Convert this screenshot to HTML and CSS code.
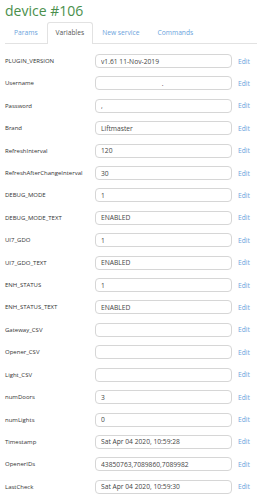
FILE: index.html
```html
<!DOCTYPE html>
<html lang="en">
<head>
  <meta charset="UTF-8"/>
  <title>device #106</title>
  <link rel="stylesheet" href="styles.css">
</head>
<body>

  <!-- Title -->
  <h1 class="title">device #106</h1>

  <!-- Tabs -->
  <ul class="tabs">
    <li><a href="#">Params</a></li>
    <li class="active"><a href="#">Variables</a></li>
    <li><a href="#">New service</a></li>
    <li><a href="#">Commands</a></li>
  </ul>

  <!-- Variables -->
  <div class="vars">
    <div class="row"><label>PLUGIN_VERSION</label><input value="v1.61 11-Nov-2019"><a href="#">Edit</a></div>
    <div class="row"><label>Username</label><input value="                                   ."><a href="#">Edit</a></div>
    <div class="row"><label>Password</label><input value=","><a href="#">Edit</a></div>
    <div class="row"><label>Brand</label><input value="Liftmaster"><a href="#">Edit</a></div>
    <div class="row"><label>RefreshInterval</label><input value="120"><a href="#">Edit</a></div>
    <div class="row"><label>RefreshAfterChangeInterval</label><input value="30"><a href="#">Edit</a></div>
    <div class="row"><label>DEBUG_MODE</label><input value="1"><a href="#">Edit</a></div>
    <div class="row"><label>DEBUG_MODE_TEXT</label><input value="ENABLED"><a href="#">Edit</a></div>
    <div class="row"><label>UI7_GDO</label><input value="1"><a href="#">Edit</a></div>
    <div class="row"><label>UI7_GDO_TEXT</label><input value="ENABLED"><a href="#">Edit</a></div>
    <div class="row"><label>ENH_STATUS</label><input value="1"><a href="#">Edit</a></div>
    <div class="row"><label>ENH_STATUS_TEXT</label><input value="ENABLED"><a href="#">Edit</a></div>
    <div class="row"><label>Gateway_CSV</label><input value=""><a href="#">Edit</a></div>
    <div class="row"><label>Opener_CSV</label><input value=""><a href="#">Edit</a></div>
    <div class="row"><label>Light_CSV</label><input value=""><a href="#">Edit</a></div>
    <div class="row"><label>numDoors</label><input value="3"><a href="#">Edit</a></div>
    <div class="row"><label>numLights</label><input value="0"><a href="#">Edit</a></div>
    <div class="row"><label>Timestamp</label><input value="Sat Apr 04 2020, 10:59:28"><a href="#">Edit</a></div>
    <div class="row"><label>OpenerIDs</label><input value="43850763,7089860,7089982"><a href="#">Edit</a></div>
    <div class="row"><label>LastCheck</label><input value="Sat Apr 04 2020, 10:59:30"><a href="#">Edit</a></div>
  </div>

</body>
</html>
```

FILE: styles.css
```css
:root {
  --green: #4a8f4c;
  --blue: #6aa3dc;
  --border: #d6d6d6;
  --text: #333;
}
* { margin:0; padding:0; box-sizing:border-box }
body {
  font-family:'Open Sans',sans-serif;
  background:#fff;
  color:var(--text);
  padding:0 0 0 5px;
  overflow:hidden;
}
a { text-decoration:none; color:var(--blue) }

/* Title */
.title {
  font-size:14px; font-weight:400;
  color:var(--green);
  line-height:16px;
  padding-top:3px;
  height:22px;
}

/* Tabs */
.tabs {
  list-style:none;
  display:flex;
  border-bottom:1px solid #e2e2e2;
  height:22px;
}
.tabs li {
  border:1px solid transparent;
  border-bottom:none;
  border-radius:3px 3px 0 0;
  margin-bottom:-1px;
}
.tabs li a {
  display:block;
  font-size:6.7px; line-height:20px;
  padding:0 8px;
}
.tabs li.active {
  border-color:#e2e2e2;
  background:#fff;
  height:22px;
}
.tabs li.active a { color:#555 }

/* Variable rows */
.vars {
  display:flex; flex-direction:column;
  gap:8.42px;
  padding-top:10px;
}
.row {
  display:flex; align-items:center;
  height:14px;
}
.row label {
  width:90px; flex:none;
  font-size:6px; color:#333;
}
.row input {
  width:137px; height:14px; flex:none;
  font-family:'Open Sans',sans-serif;
  font-size:6.7px; color:#444;
  border:1px solid var(--border);
  border-radius:4px;
  padding:0 5px;
  outline:none;
  white-space:pre;
}
.row a {
  margin-left:6px;
  font-size:6.7px;
}
```
